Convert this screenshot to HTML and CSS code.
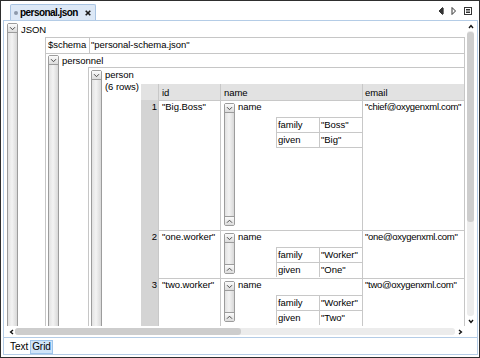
FILE: index.html
```html
<!DOCTYPE html>
<html>
<head>
<meta charset="utf-8">
<link rel="stylesheet" href="styles.css">
</head>
<body>
<div class="win">
  <div class="tabbar">
    <div class="tab">
      <span class="dot"></span>
      <span class="tabname">personal.json</span>
      <svg class="close" width="6" height="6" viewBox="0 0 6 6"><path d="M0.7 0.7L5.3 5.3M5.3 0.7L0.7 5.3" stroke="#1a1a1a" stroke-width="1.6"/></svg>
    </div>
    <div class="tools">
      <svg width="6" height="8" viewBox="0 0 6 8"><path d="M4.5 0.5L1 4L4.5 7.5Z" fill="#333" stroke="#333" stroke-width="1"/><path d="M5.5 1V7" stroke="#777" stroke-width="1"/></svg>
      <svg width="6" height="8" viewBox="0 0 6 8"><path d="M1 0.5L4.5 4L1 7.5Z" fill="#fff" stroke="#333" stroke-width="1"/></svg>
      <svg width="8" height="8" viewBox="0 0 8 8"><rect x="0.5" y="0.5" width="7" height="7" fill="#fff" stroke="#333"/><path d="M2 2.5H6M2 4H6M2 5.5H6" stroke="#333" stroke-width="1"/></svg>
    </div>
  </div>

  <div class="editor">
    <div class="editor-main">
      <div class="viewport">
        <div class="node n-json">
          <div class="bar">
            <div class="btn"><svg width="7" height="5" viewBox="0 0 7 5"><path d="M1 1.2L3.5 3.7L6 1.2" fill="none" stroke="#4a4a4a" stroke-width="1"/></svg></div>
            <div class="btn up"><svg width="7" height="5" viewBox="0 0 7 5"><path d="M1 3.7L3.5 1.2L6 3.7" fill="none" stroke="#4a4a4a" stroke-width="1"/></svg></div>
          </div>
          <div class="nbody">
            <div class="lbl l-json">JSON</div>
            <div class="kids k-json">
              <div class="kv">
                <div class="k">$schema</div>
                <div class="v">"personal-schema.json"</div>
              </div>
              <div class="node n-personnel">
                <div class="bar">
                  <div class="btn"><svg width="7" height="5" viewBox="0 0 7 5"><path d="M1 1.2L3.5 3.7L6 1.2" fill="none" stroke="#4a4a4a" stroke-width="1"/></svg></div>
                  <div class="btn up"><svg width="7" height="5" viewBox="0 0 7 5"><path d="M1 3.7L3.5 1.2L6 3.7" fill="none" stroke="#4a4a4a" stroke-width="1"/></svg></div>
                </div>
                <div class="nbody">
                  <div class="lbl l-personnel">personnel</div>
                  <div class="kids k-personnel">
                    <div class="node n-person">
                      <div class="bar">
                        <div class="btn"><svg width="7" height="5" viewBox="0 0 7 5"><path d="M1 1.2L3.5 3.7L6 1.2" fill="none" stroke="#4a4a4a" stroke-width="1"/></svg></div>
                        <div class="btn up"><svg width="7" height="5" viewBox="0 0 7 5"><path d="M1 3.7L3.5 1.2L6 3.7" fill="none" stroke="#4a4a4a" stroke-width="1"/></svg></div>
                      </div>
                      <div class="plabel">person<br>(6 rows)</div>
                      <div class="tbl">
                        <div class="row head">
                          <div class="rn"></div>
                          <div class="c">id</div>
                          <div class="c">name</div>
                          <div class="c">email</div>
                        </div>

                        <div class="row r-big">
                          <div class="rn">1</div>
                          <div class="c">"Big.Boss"</div>
                          <div class="c namecell">
                            <div class="bar">
                              <div class="btn"><svg width="7" height="5" viewBox="0 0 7 5"><path d="M1 1.2L3.5 3.7L6 1.2" fill="none" stroke="#4a4a4a" stroke-width="1"/></svg></div>
                              <div class="btn up"><svg width="7" height="5" viewBox="0 0 7 5"><path d="M1 3.7L3.5 1.2L6 3.7" fill="none" stroke="#4a4a4a" stroke-width="1"/></svg></div>
                            </div>
                            <div class="namebody">
                              <div class="nlbl">name</div>
                              <div class="sub closed">
                                <div class="sk">family</div><div class="sv">"Boss"</div>
                                <div class="sk">given</div><div class="sv">"Big"</div>
                              </div>
                            </div>
                          </div>
                          <div class="c em">"chief@oxygenxml.com"</div>
                        </div>

                        <div class="row r-std">
                          <div class="rn">2</div>
                          <div class="c">"one.worker"</div>
                          <div class="c namecell">
                            <div class="bar">
                              <div class="btn"><svg width="7" height="5" viewBox="0 0 7 5"><path d="M1 1.2L3.5 3.7L6 1.2" fill="none" stroke="#4a4a4a" stroke-width="1"/></svg></div>
                              <div class="btn up"><svg width="7" height="5" viewBox="0 0 7 5"><path d="M1 3.7L3.5 1.2L6 3.7" fill="none" stroke="#4a4a4a" stroke-width="1"/></svg></div>
                            </div>
                            <div class="namebody">
                              <div class="nlbl">name</div>
                              <div class="sub">
                                <div class="sk">family</div><div class="sv">"Worker"</div>
                                <div class="sk">given</div><div class="sv">"One"</div>
                              </div>
                            </div>
                          </div>
                          <div class="c em">"one@oxygenxml.com"</div>
                        </div>

                        <div class="row r-std">
                          <div class="rn">3</div>
                          <div class="c">"two.worker"</div>
                          <div class="c namecell">
                            <div class="bar">
                              <div class="btn"><svg width="7" height="5" viewBox="0 0 7 5"><path d="M1 1.2L3.5 3.7L6 1.2" fill="none" stroke="#4a4a4a" stroke-width="1"/></svg></div>
                              <div class="btn up"><svg width="7" height="5" viewBox="0 0 7 5"><path d="M1 3.7L3.5 1.2L6 3.7" fill="none" stroke="#4a4a4a" stroke-width="1"/></svg></div>
                            </div>
                            <div class="namebody">
                              <div class="nlbl">name</div>
                              <div class="sub">
                                <div class="sk">family</div><div class="sv">"Worker"</div>
                                <div class="sk">given</div><div class="sv">"Two"</div>
                              </div>
                            </div>
                          </div>
                          <div class="c em">"two@oxygenxml.com"</div>
                        </div>
                        <div class="more"></div>
                      </div>
                    </div>
                  </div>
                </div>
              </div>
            </div>
          </div>
        </div>
      </div>
      <div class="vscroll">
        <div class="arr"><svg width="6" height="5" viewBox="0 0 6 5"><path d="M1 4L3 1.6L5 4" fill="none" stroke="#111" stroke-width="1.4"/></svg></div>
        <div class="groove"><div class="thumb"></div></div>
        <div class="arr"><svg width="6" height="5" viewBox="0 0 6 5"><path d="M1 1L3 3.4L5 1" fill="none" stroke="#111" stroke-width="1.4"/></svg></div>
      </div>
    </div>
    <div class="hscroll">
      <div class="harr"><svg width="5" height="6" viewBox="0 0 5 6"><path d="M4 1L1.6 3L4 5" fill="none" stroke="#111" stroke-width="1.4"/></svg></div>
      <div class="hgroove"><div class="hthumb"></div></div>
      <div class="harr"><svg width="5" height="6" viewBox="0 0 5 6"><path d="M1 1L3.4 3L1 5" fill="none" stroke="#111" stroke-width="1.4"/></svg></div>
      <div class="corner"></div>
    </div>
  </div>

  <div class="modes">
    <span class="mode">Text</span>
    <span class="mode on">Grid</span>
  </div>
</div>
</body>
</html>
```

FILE: styles.css
```css
* { box-sizing: border-box; margin: 0; padding: 0; }
html, body { background: #fff; }
body {
  margin: 0;
  font-family: "Liberation Sans", Arial, sans-serif;
  font-size: 9.5px;
  letter-spacing: -0.05px;
  color: #000;
}
.win {
  width: 480px;
  height: 358px;
  border: 1px solid #2e2e2e;
  background: #fff;
  display: flex;
  flex-direction: column;
  overflow: hidden;
}

/* top tab bar */
.tabbar {
  height: 19px;
  flex: none;
  display: flex;
  align-items: flex-end;
  padding-left: 9px;
  padding-right: 7px;
}
.tab {
  height: 16px;
  width: 86px;
  display: flex;
  align-items: center;
  background: #dce8f6;
  border: 1px solid #a9c4e2;
  border-bottom: none;
  border-radius: 2px 2px 0 0;
  padding-left: 3px;
}
.dot {
  width: 4px;
  height: 4px;
  border-radius: 50%;
  background: #8d99aa;
  margin-right: 2px;
}
.tabname {
  font-size: 10px;
  font-weight: bold;
  letter-spacing: -0.55px;
  line-height: 12px;
}
.close { margin-left: 7px; }
.tools {
  margin-left: auto;
  align-self: flex-start;
  margin-top: 6px;
  display: flex;
  gap: 7px;
}
.tools svg { display: block; }

/* editor frame */
.editor {
  height: 318px;
  flex: none;
  margin: 0 1px 0 2px;
  border: 1px solid #b4cce6;
  display: flex;
  flex-direction: column;
}
.editor-main {
  flex: 1;
  display: flex;
  min-height: 0;
}
.viewport {
  flex: 1;
  overflow: hidden;
}

/* tree nodes */
.node { display: flex; align-items: stretch; }
.bar {
  width: 11px;
  flex: none;
  border: 1px solid #9c9c9c;
  border-radius: 2px;
  background: linear-gradient(to right, #e2e2e2, #f3f3f3 45%, #d8d8d8);
  display: flex;
  flex-direction: column;
  justify-content: space-between;
}
.btn {
  height: 9px;
  border-bottom: 1px solid #9c9c9c;
  background: linear-gradient(#fbfbfb, #dcdcdc);
  display: flex;
  align-items: center;
  justify-content: center;
}
.btn.up { border-bottom: none; border-top: 1px solid #9c9c9c; }
.btn svg { display: block; }
.nbody { flex: 1; min-width: 0; display: flex; flex-direction: column; }
.lbl { padding-left: 3px; white-space: nowrap; }

.n-json > .bar { margin: 2px 0 0 3px; }
.l-json { height: 16px; line-height: 17px; }
.k-json {
  margin-left: 27px;
  border: 1px solid #c6c6c6;
  border-bottom: none;
}
.kv {
  display: grid;
  grid-template-columns: 43px 1fr;
  height: 15px;
  line-height: 14px;
}
.k { padding-left: 2px; white-space: nowrap; }
.v { border-left: 1px solid #c6c6c6; padding-left: 1px; white-space: nowrap; }

.n-personnel { border-top: 1px solid #c6c6c6; }
.n-personnel > .bar { margin: 1px 0 0 2px; }
.l-personnel { height: 13px; line-height: 13px; }
.k-personnel {
  margin-left: 29px;
  border-top: 1px solid #c6c6c6;
  border-left: 1px solid #c6c6c6;
}
.n-person > .bar { margin: 2px 0 0 2px; }
.plabel {
  width: 39px;
  flex: none;
  padding: 1px 0 0 3px;
  line-height: 12px;
  white-space: nowrap;
}

/* table */
.tbl { flex: 1; min-width: 0; margin-top: 16px; }
.row {
  display: grid;
  grid-template-columns: 17px 62px 142px 1fr;
}
.c {
  border-left: 1px solid #c8c8c8;
  padding-left: 3px;
  line-height: 12px;
  white-space: nowrap;
}
.rn {
  background: #d4d4d4;
  text-align: right;
  padding-right: 1px;
  line-height: 12px;
}
.head { height: 16px; background: #e2e2e2; }
.head .c { line-height: 15px; padding-top: 1px; }
.head .rn { background: #e2e2e2; }
.r-big, .r-std { border-top: 1px solid #c8c8c8; }
.r-big .rn, .r-std .rn { margin-top: -1px; padding-top: 1px; }
.r-big { height: 130px; }
.r-std { height: 48px; }
.row > .c:last-child { padding-left: 2px; }
.em { letter-spacing: -0.3px; }
.namecell { display: flex; padding-left: 0; }
.namecell > .bar { margin: 2px 0 4px 3px; }
.namebody { flex: 1; display: flex; flex-direction: column; }
.nlbl { height: 16px; padding-left: 3px; }
.sub {
  margin-left: 41px;
  display: grid;
  grid-template-columns: 42px 1fr;
  border-left: 1px solid #c8c8c8;
}
.sub.closed { border-bottom: 1px solid #c8c8c8; }
.sk, .sv {
  height: 15px;
  border-top: 1px solid #c8c8c8;
  line-height: 13px;
  padding-left: 1px;
}
.sv { border-left: 1px solid #c8c8c8; }
.more { height: 160px; border-top: 1px solid #c8c8c8; }

/* scrollbars */
.vscroll {
  width: 12px;
  flex: none;
  display: flex;
  flex-direction: column;
}
.arr {
  height: 10px;
  flex: none;
  display: flex;
  align-items: center;
  justify-content: center;
}
.arr svg { display: block; }
.groove {
  flex: 1;
  margin: 0 3px 0 2px;
  background: #ececec;
  border-radius: 3px;
  padding-top: 1px;
}
.thumb {
  height: 190px;
  background: #cdcdcd;
  border-radius: 3px;
}
.hscroll {
  height: 11px;
  flex: none;
  display: flex;
  align-items: center;
}
.harr {
  width: 10px;
  height: 11px;
  flex: none;
  display: flex;
  align-items: center;
  justify-content: flex-end;
}
.harr:nth-child(3) { justify-content: center; }
.harr svg { display: block; }
.hgroove {
  flex: 1;
  height: 7px;
  margin-left: 1px;
  background: #ececec;
  border-radius: 3px;
}
.hthumb {
  width: 226px;
  height: 7px;
  background: #cdcdcd;
  border-radius: 3px;
}
.corner { width: 12px; flex: none; }

/* bottom mode tabs */
.modes {
  height: 17px;
  flex: none;
  margin: 0 1px 0 2px;
  border: 1px solid #b4cce6;
  border-top: none;
  display: flex;
  align-items: flex-start;
  padding: 2px 0 0 4px;
  font-size: 10px;
}
.mode {
  height: 14px;
  line-height: 12px;
  padding: 0 1px;
  border: 1px solid transparent;
}
.mode.on {
  background: #cfe4f8;
  border-color: #9ec4ea;
}
```
